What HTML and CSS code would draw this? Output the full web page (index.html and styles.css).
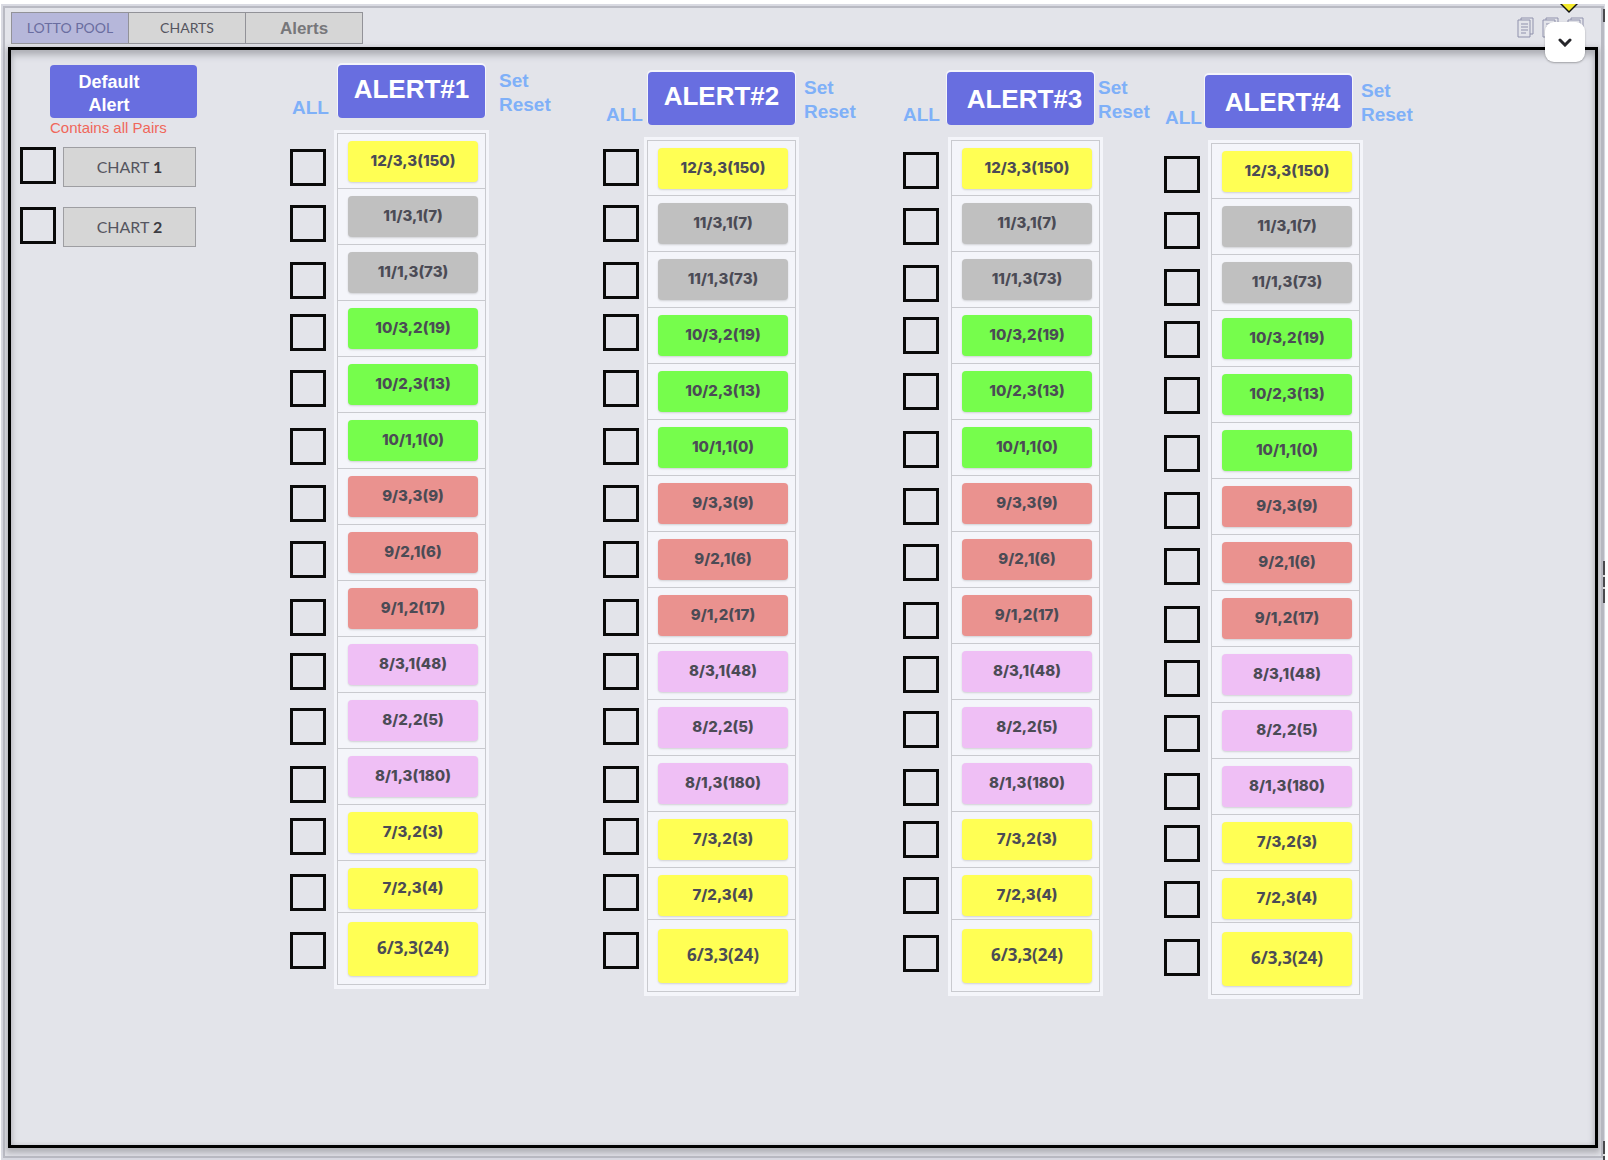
FILE: index.html
```html
<!DOCTYPE html>
<html lang="en">
<head>
    <meta charset="utf-8">
    <title>Alerts</title>
    <link rel="stylesheet" href="styles.css">
</head>
<body>
<div class="window">
    <i class="marker"></i>
    <i class="edge edge-top"></i>
    <i class="edge edge-middle"></i>
    <i class="edge edge-bottom"></i>
    <div class="frame">
        <header class="topbar">
            <nav class="tabs">
                <button class="tab active">LOTTO POOL</button>
                <button class="tab">CHARTS</button>
                <button class="tab tab-alerts">Alerts</button>
            </nav>
            <div class="tools">
                <svg class="copy" viewBox="0 0 17 21"><path d="M4 3V1h12v16h-3M1 3h12v17H1z"/><path d="M4 7h7M4 10h7M4 13h7M4 16h5"/></svg>
                <svg class="copy" viewBox="0 0 17 21"><path d="M4 3V1h12v16h-3M1 3h12v17H1z"/><path d="M4 7h7M4 10h7M4 13h7M4 16h5"/></svg>
                <svg class="copy" viewBox="0 0 17 21"><path d="M4 3V1h12v16h-3M1 3h12v17H1z"/><path d="M4 7h7M4 10h7M4 13h7M4 16h5"/></svg>
                <button class="expand"><svg viewBox="0 0 14 9"><path d="M2 2l5 5 5-5"/></svg></button>
            </div>
        </header>
        <main class="panel">
            <aside class="sidebar">
                <button class="default-alert">Default<br>Alert</button>
                <p class="note">Contains all Pairs</p>
                <div class="chart-row">
                    <input type="checkbox" class="check" aria-labelledby="chart1">
                    <button class="chart" id="chart1">CHART <b>1</b></button>
                </div>
                <div class="chart-row">
                    <input type="checkbox" class="check" aria-labelledby="chart2">
                    <button class="chart" id="chart2">CHART <b>2</b></button>
                </div>
            </aside>
            <div class="alerts" id="alerts"></div>
        </main>
    </div>
</div>
<script src="alerts.js"></script>
</body>
</html>
```
FILE: styles.css
```css
* {
    box-sizing: border-box;
}
body {
    margin: 0;
    background: #fff;
    font-family: "Liberation Sans", Arial, sans-serif;
}
button {
    margin: 0;
    padding: 0;
    border: none;
    background: none;
    font-family: inherit;
    cursor: pointer;
}

/* window */
.window {
    position: relative;
    display: flex;
    min-height: calc(100vh - 4px);
    margin: 4px 3px 0 1px;
    padding: 2px 1px 2px 2px;
    background: #d9dae2;
}
.frame {
    flex: 1;
    display: flex;
    flex-direction: column;
    border: 2px solid #b9bac3;
    border-right-width: 3px;
    background: #e3e4ea;
}
.topbar {
    display: flex;
    justify-content: space-between;
    padding: 4px 17px 3px 6px;
}
.tabs {
    display: flex;
}
.tab {
    width: 118px;
    height: 32px;
    padding-bottom: 2px;
    border: 1px solid #929298;
    background: #d6d6d6;
    color: #55555f;
    font: 14px Lato, sans-serif;
}
.tab + .tab {
    margin-left: -1px;
}
.tab.active {
    background: #b6b7da;
    color: #6a6da0;
}
.tab-alerts {
    padding: 2px 0 0;
    color: #77777a;
    font: bold 17px "Liberation Sans", Arial, sans-serif;
}
.tools {
    position: relative;
    display: flex;
    gap: 8px;
    padding-top: 5px;
}
.copy {
    width: 17px;
    height: 21px;
    fill: none;
    stroke: #8f91ac;
}
.expand {
    position: absolute;
    top: 10px;
    right: -1px;
    width: 40px;
    height: 40px;
    border-radius: 9px;
    background: #fff;
    box-shadow: 0 1px 2px rgba(0, 0, 0, .3);
}
.expand svg {
    width: 14px;
    height: 9px;
    fill: none;
    stroke: #26262a;
    stroke-width: 3;
    stroke-linecap: round;
}
.marker {
    position: absolute;
    top: 0;
    right: 27px;
    width: 18px;
    height: 9px;
    background: #111;
    clip-path: polygon(0 0, 100% 0, 50% 100%);
}
.marker::after {
    content: "";
    position: absolute;
    inset: 0 2px 2px;
    background: #f4ea2e;
    clip-path: polygon(0 0, 100% 0, 50% 100%);
}
.edge {
    position: absolute;
    right: 0;
    width: 2px;
    background: #4a4a4e;
}
.edge-top { top: 5px; height: 13px; }
.edge-middle {
    top: 557px;
    height: 42px;
    background: linear-gradient(#4a4a4e 14px, #ddd 14px 16px, #4a4a4e 16px 26px, #ddd 26px 28px, #4a4a4e 28px);
}
.edge-bottom {
    bottom: 0;
    height: 19px;
    background: linear-gradient(#4a4a4e 13px, #ddd 13px 15px, #4a4a4e 15px);
}

/* panel */
.panel {
    flex: 1;
    display: flex;
    margin: 0 3px 8px;
    border: 3px solid #000;
    box-shadow: 0 3px 6px 2px #b0b0b6, inset 0 5px 7px #aeafb5, inset 0 0 5px #c4c5cc;
}
.sidebar {
    width: 279px;
    padding: 15px 9px;
}
.default-alert {
    display: block;
    width: 147px;
    height: 53px;
    margin-left: 30px;
    padding: 4px 29px 0 0;
    border-radius: 4px;
    background: #686ee0;
    color: #fff;
    font-size: 18px;
    font-weight: bold;
    line-height: 23px;
}
.note {
    margin: 0 0 10px 30px;
    color: #f0675a;
    font-size: 15px;
    line-height: 19px;
}
.chart-row {
    display: flex;
    gap: 7px;
    margin-bottom: 20px;
}
.chart {
    width: 133px;
    height: 40px;
    padding-bottom: 2px;
    border: 1px solid #9e9ea2;
    background: #d6d6d6;
    color: #55555f;
    font: 16px Lato, sans-serif;
}
.chart b {
    color: #3c3c42;
}
.check {
    appearance: none;
    width: 36px;
    height: 37px;
    margin: 0;
    border: 3px solid #0a0a0a;
}
.check:checked {
    background: #686ee0;
}

/* alerts */
.alerts {
    flex: 1;
    display: grid;
    grid-template-columns: 313fr 300fr 261fr 431fr;
}
.alert-1 { --top: 15px; --all-x: 2px; --button-x: 48px; --actions-x: 14px; --list-x: 44px; --checks-top: 19px; }
.alert-2 { --top: 22px; --all-x: 3px; --button-x: 45px; --actions-x: 9px; --list-x: 41px; --checks-top: 12px; }
.alert-3 { --top: 22px; --all-x: 0px; --button-x: 44px; --actions-x: 4px; --list-x: 45px; --checks-top: 15px; }
.alert-4 { --top: 25px; --all-x: 1px; --button-x: 41px; --actions-x: 9px; --list-x: 44px; --checks-top: 16px; }
.alert {
    padding-top: var(--top);
}
.alert-head {
    display: grid;
    grid-template-columns: var(--button-x) 147px auto;
    height: 53px;
    margin-bottom: 12px;
}
.all,
.actions button {
    color: #7fb0f8;
    font-size: 19px;
    font-weight: bold;
}
.all {
    align-self: end;
    justify-self: start;
    margin: 0 0 1px var(--all-x);
    line-height: 18px;
}
.alert-name {
    padding-bottom: 4px;
    border-radius: 4px;
    background: #686ee0;
    color: #fff;
    font-size: 26px;
    font-weight: bold;
    box-shadow: 0 -1px 0 1px #f4f5fa;
}
.alert-3 .alert-name,
.alert-4 .alert-name {
    padding: 2px 0 0 8px;
}
.actions {
    display: flex;
    flex-direction: column;
    align-items: flex-start;
    padding: 4px 0 0 var(--actions-x);
}
.actions button {
    line-height: 24px;
}
.alert-body {
    display: grid;
    grid-template-columns: var(--list-x) 155px;
    align-items: start;
}
.checks {
    display: grid;
    grid-template-rows: 56px 57px 52px 56px 58px 57px 56px 58px 54px 55px 58px 52px 56px 58px 37px;
    padding-top: var(--checks-top);
}
.list {
    padding: 3px 3px 4px;
    background: #f4f5fa;
}
.pairs {
    margin: 0;
    padding: 0;
    border: 1px solid #c9cacf;
    border-bottom: none;
    list-style: none;
}
.pairs li {
    height: 56px;
    padding: 7px 0 0 10px;
    border-bottom: 1px solid #c9cacf;
}
.pairs li:first-child { height: 55px; }
.pairs li:nth-child(14) { height: 52px; }
.pairs li:last-child {
    height: 72px;
    padding-top: 9px;
}
.pair {
    display: block;
    width: 130px;
    height: 41px;
    border-radius: 4px;
    color: #4b4b55;
    font: 800 15px/39px Inter, sans-serif;
    text-align: center;
    box-shadow: 0 1px 2px rgba(0, 0, 0, .15);
}
li:last-child .pair {
    height: 54px;
    font: bold 17px/51px "Open Sans", sans-serif;
}
.yellow { background: #ffff54; }
.grey { background: #c0c0c0; }
.green { background: #76fd4c; }
.red { background: #ea928f; }
.pink { background: #efbff5; }
```
FILE: alerts.js
```js
const pairs = [
    ['12/3,3(150)', 'yellow'],
    ['11/3,1(7)', 'grey'],
    ['11/1,3(73)', 'grey'],
    ['10/3,2(19)', 'green'],
    ['10/2,3(13)', 'green'],
    ['10/1,1(0)', 'green'],
    ['9/3,3(9)', 'red'],
    ['9/2,1(6)', 'red'],
    ['9/1,2(17)', 'red'],
    ['8/3,1(48)', 'pink'],
    ['8/2,2(5)', 'pink'],
    ['8/1,3(180)', 'pink'],
    ['7/3,2(3)', 'yellow'],
    ['7/2,3(4)', 'yellow'],
    ['6/3,3(24)', 'yellow']
];

function renderAlert(n) {
    const checks = pairs.map((p, i) => `<input type="checkbox" class="check" id="a${n}p${i}">`).join('');
    const items = pairs.map((p, i) => `<li><label class="pair ${p[1]}" for="a${n}p${i}">${p[0]}</label></li>`).join('');
    return `<section class="alert alert-${n}">
        <div class="alert-head">
            <button class="all">ALL</button>
            <button class="alert-name">ALERT#${n}</button>
            <div class="actions"><button>Set</button><button>Reset</button></div>
        </div>
        <div class="alert-body">
            <div class="checks">${checks}</div>
            <div class="list"><ul class="pairs">${items}</ul></div>
        </div>
    </section>`;
}

const alerts = document.getElementById('alerts');
alerts.innerHTML = [1, 2, 3, 4].map(renderAlert).join('');

// ALL ticks every box of its alert, Reset clears them
alerts.addEventListener('click', event => {
    const name = event.target.textContent;
    if (event.target.tagName !== 'BUTTON' || (name !== 'ALL' && name !== 'Reset'))
        return;
    event.target.closest('.alert').querySelectorAll('.check').forEach(box => {
        box.checked = name === 'ALL';
    });
});
```
